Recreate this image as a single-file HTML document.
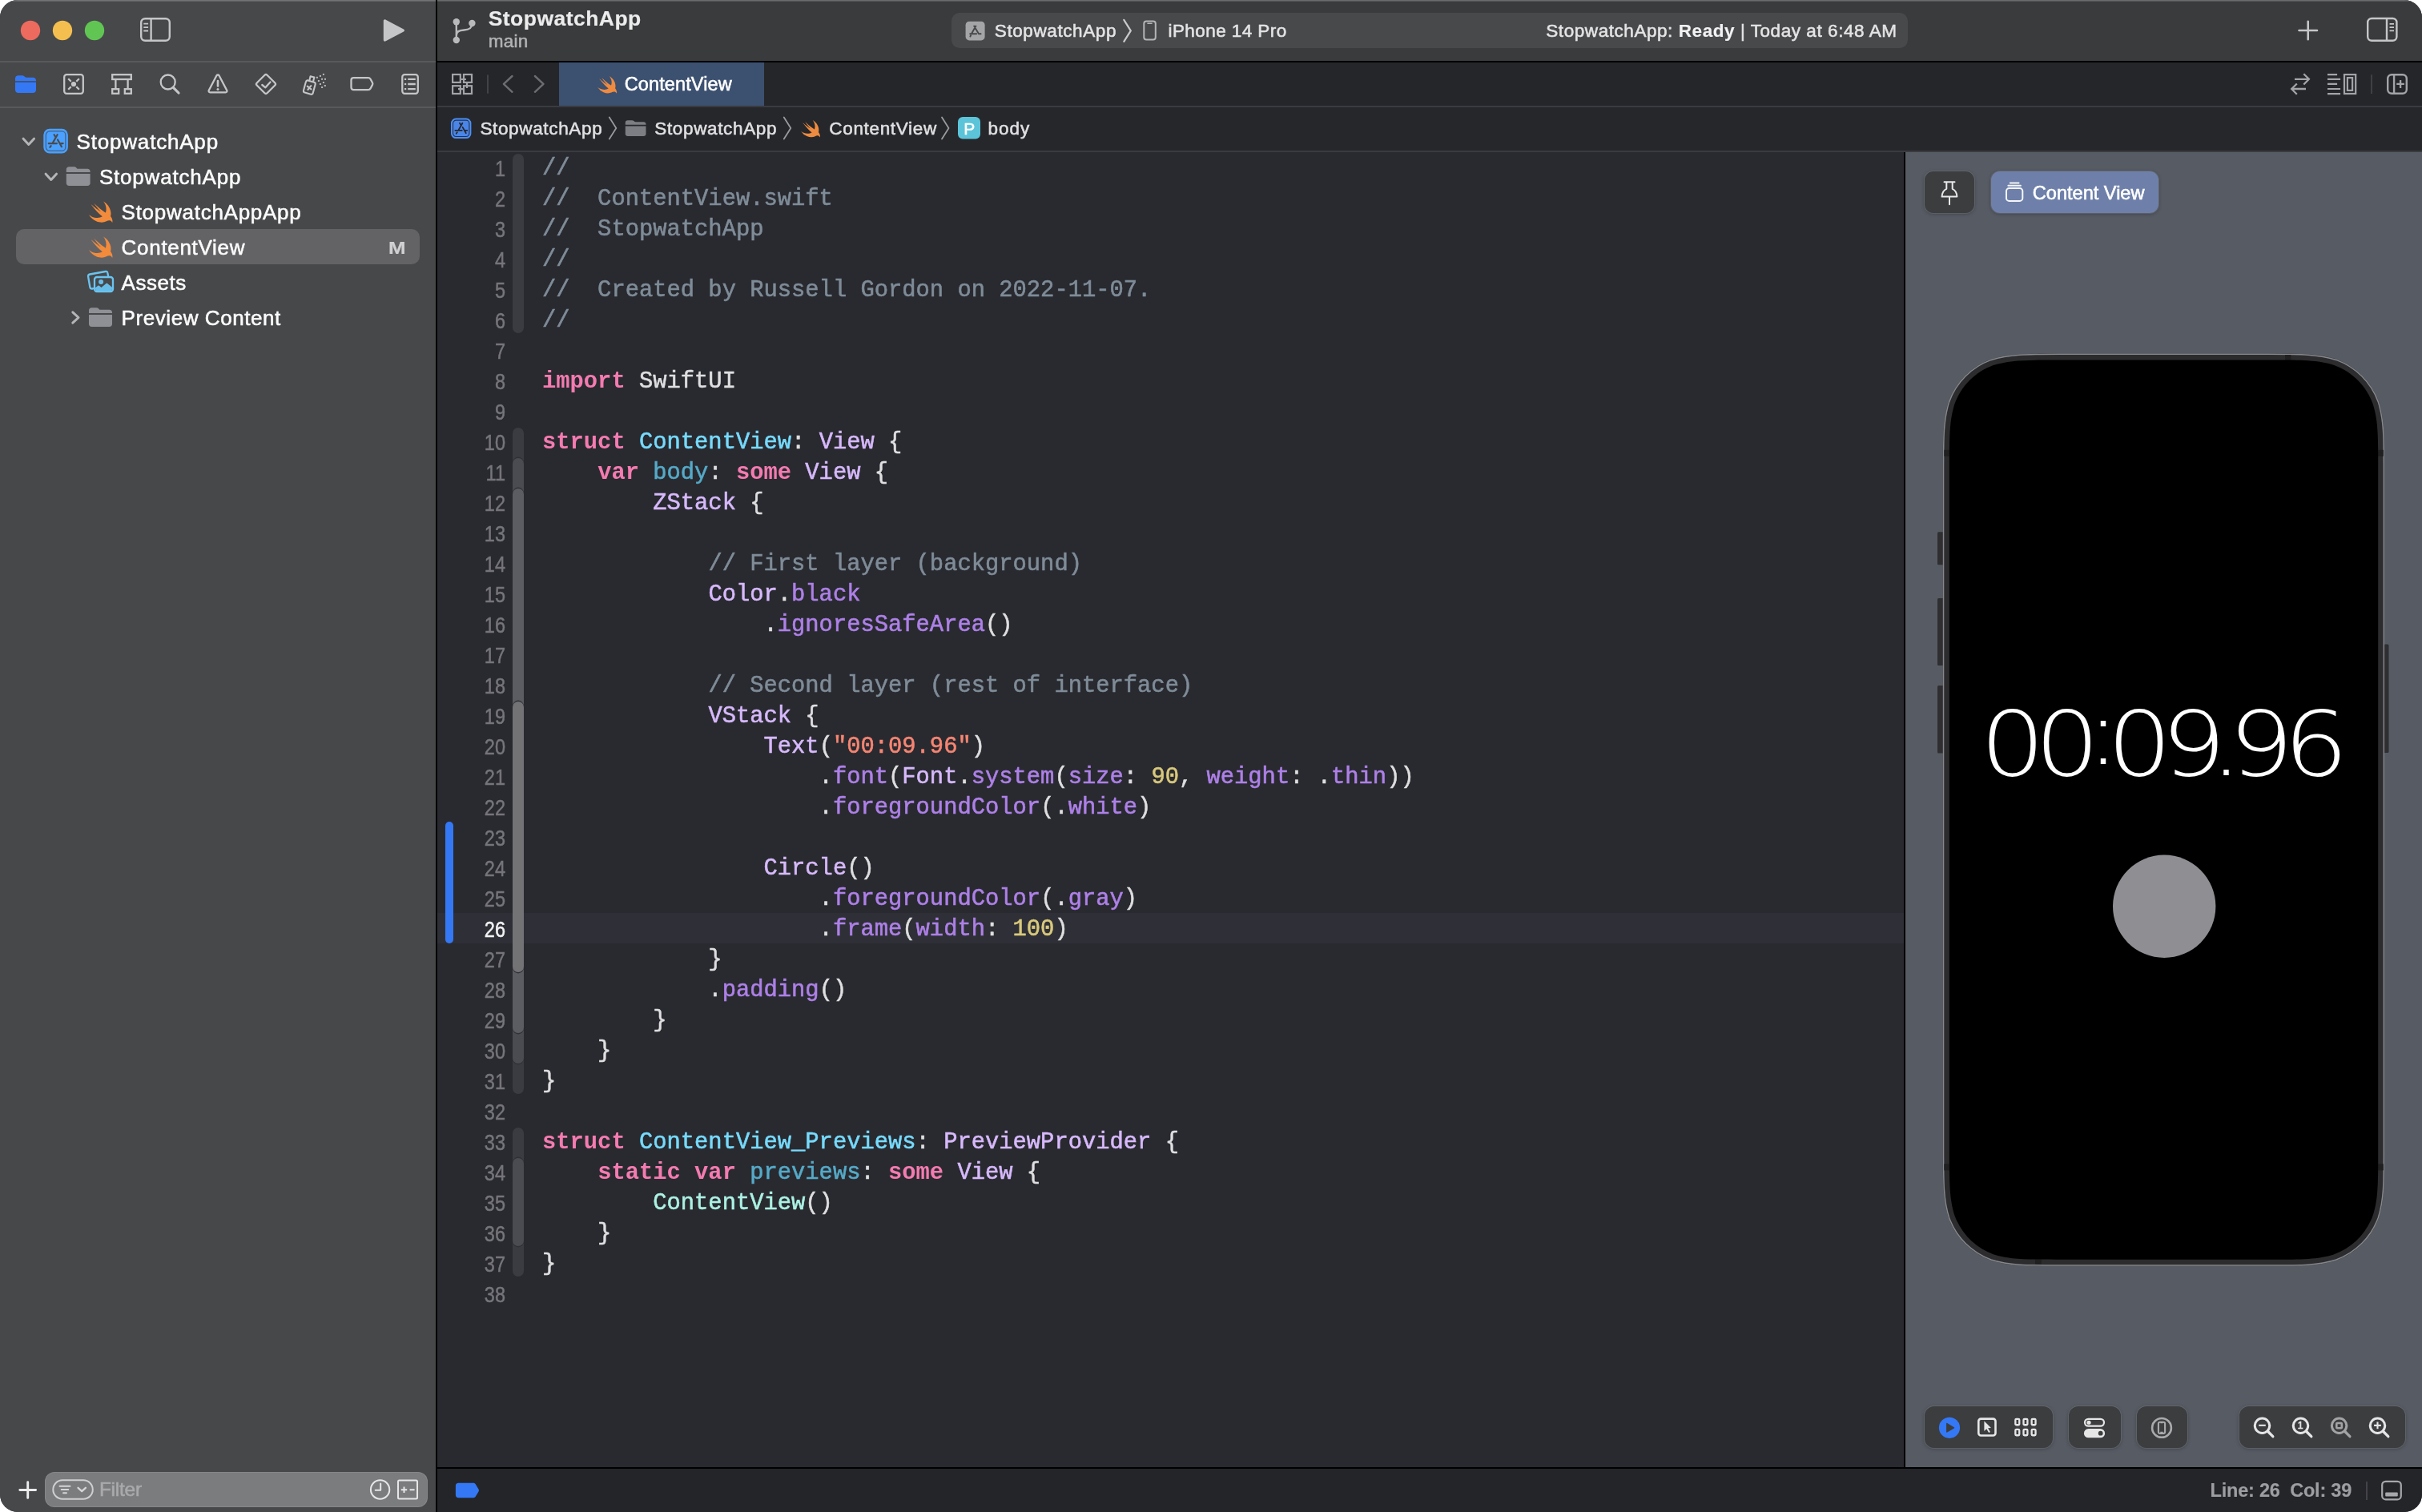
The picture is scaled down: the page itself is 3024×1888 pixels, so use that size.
<!DOCTYPE html>
<html lang="en"><head><meta charset="utf-8"><title>StopwatchApp — ContentView.swift</title>
<style>

html,body{margin:0;padding:0;background:#fff;}
body{width:3024px;height:1888px;overflow:hidden;position:relative;font-family:"Liberation Sans",sans-serif;}
#win{will-change:transform;position:absolute;left:0;top:0;width:3024px;height:1888px;border-radius:22px;overflow:hidden;background:#292a30;}
.a{position:absolute;}
.t{position:absolute;white-space:pre;line-height:1;-webkit-text-stroke:0.55px;}
svg{position:absolute;overflow:visible;}
#sidebar{left:0;top:0;width:544px;height:1888px;background:#47484a;}
#vsplit{left:544px;top:0;width:2px;height:1888px;background:#000;}
#toolbar{left:546px;top:0;width:2478px;height:76px;background:#3a3b3d;}
#tabbar{left:546px;top:78px;width:2478px;height:54px;background:#25262a;}
#crumbs{left:546px;top:134px;width:2478px;height:54px;background:#26272b;}
#editor{left:546px;top:190px;width:1831px;height:1642px;background:#292a30;overflow:hidden;}
#canvas{left:2379px;top:190px;width:645px;height:1642px;background:#575b64;overflow:hidden;}
#statusbar{left:546px;top:1834px;width:2478px;height:54px;background:#242529;}
.hl{left:0;width:3024px;height:2px;}
.code{position:absolute;left:131px;padding-top:2px;-webkit-text-stroke:0.55px;white-space:pre;font-family:"Liberation Mono",monospace;font-size:28.8px;line-height:38px;height:38px;color:#dfdfe0;}
.ln{position:absolute;left:0;padding-top:2px;-webkit-text-stroke:0.5px;width:85px;text-align:right;font-size:27px;line-height:38px;height:38px;color:#75757a;transform:scaleX(0.87);transform-origin:100% 50%;}
.c{color:#7f8c98}.k{color:#f47bb0;font-weight:bold;-webkit-text-stroke:0}.td{color:#76dbfd}.d{color:#55aac8}.s{color:#d7b9fc}.m{color:#ae80e8}.p{color:#acf2e4}.str{color:#f68572}.n{color:#d9c97c}
.btn{position:absolute;background:#3c3d3f;border-radius:12px;box-shadow:0 0 0 1px rgba(255,255,255,0.11),0 1px 5px rgba(0,0,0,0.3);}

</style></head>
<body>
<div id="win">
<div id="sidebar" class="a">
<div class="a" style="left:0;top:0;width:544px;height:2px;background:linear-gradient(#7a7b7d,#5a5b5d)"></div>
<div class="a hl" style="top:76px;width:544px;background:#58595b"></div>
<div class="a hl" style="top:133px;width:544px;background:#58595b"></div>
<div class="a" style="left:20px;top:286px;width:504px;height:44px;border-radius:10px;background:#636366"></div>
<svg width="544" height="1888" viewBox="0 0 544 1888"><circle cx="38" cy="38" r="12.200" fill="#ed6a5e"/><circle cx="78" cy="38" r="12.200" fill="#f5bf4f"/><circle cx="118" cy="38" r="12.200" fill="#61c554"/><g fill="none" stroke="#c5c6c8" stroke-width="2.400"><rect x="176.200" y="23.200" width="35.600" height="27.600" rx="5"/><path d="M188.600 23.200v27.600"/><path d="M179.300 29.700h5.800M179.300 34.100h5.800M179.300 38.500h5.800" stroke-width="1.800"/></g><path d="M478.800 26.300v23.400c0 1.700 1.500 2.400 2.900 1.600l22.300-11.900c1.400-.8 1.400-2.200 0-3l-22.300-11.700c-1.400-.8-2.900-.1-2.900 1.600z" fill="#c5c6c8"/><g fill="#3478f6"><path d="M19 98.200c0-2.500 1.500-4 4-4h4.300c1.300 0 2 .3 2.900 1.100l.9.800c.6.500 1.100.700 2 .700H41c2.500 0 4 1.500 4 4v.4H19z"/><path d="M19 102.700h26V112c0 2.500-1.500 4-4 4H23c-2.500 0-4-1.500-4-4z"/></g><g fill="none" stroke="#c5c6c8" stroke-width="2.300" ><rect x="80.200" y="93.200" width="23.600" height="23.600" rx="3"/><path d="M85.200 98.200l3.500 3.500M98.800 98.200l-3.500 3.500M85.200 111.800l3.500-3.500M98.800 111.800l-3.500-3.500"/></g><circle cx="92" cy="105" r="3.100" fill="#c5c6c8"/><g fill="none" stroke="#c5c6c8" stroke-width="2.300"><rect x="140.200" y="93.200" width="23.600" height="5.800"/><path d="M144.400 99v12M159.600 99v12"/><rect x="140.200" y="111.200" width="8" height="5.600"/><rect x="155.800" y="111.200" width="8" height="5.600"/></g><g fill="none" stroke="#c5c6c8" stroke-linecap="round"><circle cx="209.700" cy="102.500" r="9" stroke-width="2.300"/><path d="M216.400 109.300l6.600 6.700" stroke-width="3.200"/></g><path d="M270.500 94.300c.7-1.200 2.300-1.200 3 0l9.700 18.400c.7 1.300-.1 2.600-1.500 2.600h-19.400c-1.400 0-2.200-1.300-1.500-2.600z" fill="none" stroke="#c5c6c8" stroke-width="2.300" stroke-linejoin="round"/><path d="M272 101v6.500" stroke="#c5c6c8" stroke-width="2.600" stroke-linecap="round"/><circle cx="272" cy="111.400" r="1.500" fill="#c5c6c8"/><g fill="none" stroke="#c5c6c8" stroke-width="2.300" stroke-linejoin="round" stroke-linecap="round"><path d="M330.500 93.700c.9-.9 2.100-.9 3 0l9.800 9.800c.9.900.9 2.100 0 3l-9.800 9.800c-.9.900-2.100.9-3 0l-9.800-9.800c-.9-.9-.9-2.100 0-3z"/><path d="M327.300 106l4.100 3.300 6.100-6.800"/></g><g fill="none" stroke="#c5c6c8" stroke-width="2.100" stroke-linejoin="round"><path d="M383.600 100.200l8.600 2.500c1.200.4 1.800 1.400 1.500 2.600l-3 11c-.3 1.200-1.400 1.800-2.600 1.500l-7.600-2.200c-1.200-.4-1.800-1.400-1.500-2.600l2.500-9.600c.3-1.200 1-2.800 2.100-3.200z"/><path d="M386.300 100.500l1.300-5.300 4.800 1.300-1.400 5.300"/><path d="M383.700 107.600l4.800 3.800M388.300 107.100l-3.900 4.900" stroke-linecap="round"/></g><g fill="#c5c6c8" opacity=".9"><rect x="402.9" y="91.9" width="2" height="2"/><rect x="398.9" y="93.9" width="2" height="2"/><rect x="394.9" y="95.8" width="2" height="2"/><rect x="401.1" y="97.8" width="2" height="2"/><rect x="405.0" y="97.8" width="2" height="2"/><rect x="396.9" y="100.0" width="2" height="2"/><rect x="402.9" y="102.0" width="2" height="2"/><rect x="398.9" y="104.0" width="2" height="2"/><rect x="404.8" y="106.0" width="2" height="2"/><rect x="401.1" y="108.0" width="2" height="2"/></g><path d="M441.500 97.100h18.300c1.200 0 2 .4 2.600 1.400l2.600 4.800c.5.900.5 1.700 0 2.600l-2.600 4.800c-.6 1-1.400 1.400-2.600 1.400h-18.300c-1.900 0-3-1.100-3-3v-9c0-1.900 1.100-3 3-3z" fill="none" stroke="#c5c6c8" stroke-width="2.300" stroke-linejoin="round"/><g fill="none" stroke="#c5c6c8"><rect x="502.300" y="93.200" width="19.500" height="23.600" rx="3" stroke-width="2.300"/><path d="M509.200 98.900h9.600M509.200 105h9.600M509.200 111.100h9.600" stroke-width="2.300"/></g><g fill="#c5c6c8"><rect x="505" y="97.800" width="2.200" height="2.200"/><rect x="505" y="103.900" width="2.200" height="2.200"/><rect x="505" y="110" width="2.200" height="2.200"/></g><path d="M29.099999999999998 173.20000000000002L35.8 180.4L42.5 173.20000000000002" fill="none" stroke="#b4b5b7" stroke-width="3" stroke-linecap="round" stroke-linejoin="round"/><g transform="translate(54.3 160.8) scale(1.0200)"><rect x="1" y="1" width="28" height="28" rx="6.500" fill="#4aa1ff" stroke="#4aa1ff" stroke-width="2"/><rect x="3" y="3" width="24" height="24" rx="4.600" fill="none" stroke="rgba(70,82,100,.8)" stroke-width="1.300"/><g stroke="#4b4b4d" stroke-width="2.100" stroke-linecap="round" fill="none"><path d="M17 7.300 11.200 17.500M13 7.300l2.100 3.400M17.300 13.300l4.900 8.700M6.300 18h10M20 18h3.900M9.200 20.900l-1.300 1.700"/></g></g><path d="M57.099999999999994 217.20000000000002L63.8 224.4L70.5 217.20000000000002" fill="none" stroke="#b4b5b7" stroke-width="3" stroke-linecap="round" stroke-linejoin="round"/><g transform="translate(82.8 208) scale(1.146153846153846 1.0909090909090908)" fill="#8e9095"><path d="M0 3.200C0 1.400 1.200 .2 3 .2h5.200c1.100 0 1.800.300 2.500 1l.8.800c.4.400.8.500 1.400.500H23c1.800 0 3 1.200 3 3v.9H0z"/><path d="M0 8.300h26V19c0 1.800-1.200 3-3 3H3c-1.800 0-3-1.200-3-3z"/></g><path transform="translate(107.10 245.85) scale(1.6264)" fill="#f28b3c" d="M13.543 3.41c4.114 2.47 6.545 7.162 5.549 11.131-.024.093-.05.181-.076.272l.002.001c2.062 2.538 1.5 5.258 1.236 4.745-1.072-2.086-3.066-1.568-4.088-1.043a6.803 6.803 0 0 1-.281.158l-.02.012-.002.002c-2.115 1.123-4.957 1.205-7.812-.022a12.568 12.568 0 0 1-5.64-4.838c.649.48 1.35.902 2.097 1.252 3.019 1.414 6.051 1.311 8.197-.002C9.651 12.73 7.101 9.67 5.146 7.191a10.628 10.628 0 0 1-1.005-1.384c2.34 2.142 6.038 4.83 7.365 5.576C8.69 8.408 6.208 4.743 6.324 4.86c4.436 4.47 8.528 6.996 8.528 6.996.154.085.27.154.36.213.085-.215.16-.44.22-.672.71-2.6-.091-5.58-1.889-7.987z"/><path transform="translate(107.10 289.85) scale(1.6264)" fill="#f28b3c" d="M13.543 3.41c4.114 2.47 6.545 7.162 5.549 11.131-.024.093-.05.181-.076.272l.002.001c2.062 2.538 1.5 5.258 1.236 4.745-1.072-2.086-3.066-1.568-4.088-1.043a6.803 6.803 0 0 1-.281.158l-.02.012-.002.002c-2.115 1.123-4.957 1.205-7.812-.022a12.568 12.568 0 0 1-5.64-4.838c.649.48 1.35.902 2.097 1.252 3.019 1.414 6.051 1.311 8.197-.002C9.651 12.73 7.101 9.67 5.146 7.191a10.628 10.628 0 0 1-1.005-1.384c2.34 2.142 6.038 4.83 7.365 5.576C8.69 8.408 6.208 4.743 6.324 4.86c4.436 4.47 8.528 6.996 8.528 6.996.154.085.27.154.36.213.085-.215.16-.44.22-.672.71-2.6-.091-5.58-1.889-7.987z"/><g fill="none" stroke="#6ac4f0" stroke-width="2.300" stroke-linejoin="round" stroke-linecap="round"><path d="M135.100 344.600L134.400 341Q134 338.600 131.600 339L112.200 342.500Q109.700 343 110.100 345.500L112.300 358.300Q112.800 360.900 115.300 360.500L116.800 360.200"/><rect x="118" y="346" width="23" height="18.050" rx="3"/></g><circle cx="126.100" cy="352.100" r="3" fill="#68bde8"/><path d="M119 359.300L122.600 356.600Q123.200 356.200 123.800 356.700L126.500 358.900L132.500 353.900Q133.300 353.300 134.100 353.900L140 358.800V361Q140 363.200 137.800 363.200H121.200Q119 363.200 119 361Z" fill="#68bde8"/><path d="M90.80000000000001 389.8L98.0 396.5L90.80000000000001 403.2" fill="none" stroke="#b4b5b7" stroke-width="3" stroke-linecap="round" stroke-linejoin="round"/><g transform="translate(111 384) scale(1.1153846153846154 1.0909090909090908)" fill="#8e9095"><path d="M0 3.200C0 1.400 1.200 .2 3 .2h5.200c1.100 0 1.800.300 2.500 1l.8.800c.4.400.8.500 1.400.500H23c1.800 0 3 1.200 3 3v.9H0z"/><path d="M0 8.300h26V19c0 1.800-1.200 3-3 3H3c-1.800 0-3-1.200-3-3z"/></g><path d="M24.800 1860.500h19.800M34.700 1850.600v19.800" stroke="#ececed" stroke-width="2.900" stroke-linecap="round"/></svg>
<span class="t" style="left:95.6px;top:164.3px;font-size:26px;color:#fbfbfb;letter-spacing:0.803px;">StopwatchApp</span>
<span class="t" style="left:123.9px;top:208.3px;font-size:26px;color:#fbfbfb;letter-spacing:0.803px;">StopwatchApp</span>
<span class="t" style="left:151.6px;top:252.3px;font-size:26px;color:#fbfbfb;letter-spacing:0.732px;">StopwatchAppApp</span>
<span class="t" style="left:151.6px;top:296.3px;font-size:26px;color:#fbfbfb;letter-spacing:0.696px;">ContentView</span>
<span class="t" style="left:151.6px;top:340.3px;font-size:26px;color:#fbfbfb;letter-spacing:0.546px;">Assets</span>
<span class="t" style="left:151.6px;top:384.3px;font-size:26px;color:#fbfbfb;letter-spacing:0.563px;">Preview Content</span>
<span class="t" style="left:485.0px;top:298.7px;font-size:22px;color:#d0d0d2;letter-spacing:1.175px;font-weight:700;-webkit-text-stroke:0.2px;transform:scaleX(1.18);transform-origin:0 50%;">M</span>
<div class="a" style="left:56px;top:1838px;width:478px;height:44px;border-radius:12px;background:#7b7c7e;box-shadow:inset 0 0 0 1px rgba(255,255,255,0.09)"></div>
<svg width="544" height="60" viewBox="0 1830 544 60" style="left:0;top:1830px"><rect x="66.300" y="1848.300" width="49.500" height="23.400" rx="11.700" fill="none" stroke="#cfcfd1" stroke-width="2"/><path d="M74.500 1855.800h13M76.700 1860h8.600M79 1864.200h4" stroke="#d5d5d7" stroke-width="2" stroke-linecap="round"/><path d="M97.500 1857.800l4.700 4.400 4.700-4.400" fill="none" stroke="#d5d5d7" stroke-width="2.300" stroke-linecap="round" stroke-linejoin="round"/><circle cx="474.600" cy="1860" r="11.700" fill="none" stroke="#e6e6e7" stroke-width="2"/><path d="M475.200 1852.500v8.200h-6.500" fill="none" stroke="#e6e6e7" stroke-width="2" stroke-linecap="round" stroke-linejoin="round"/><rect x="497" y="1848.600" width="24" height="23" rx="1.500" fill="none" stroke="#e6e6e7" stroke-width="2"/><path d="M500.800 1860.300h7.400M504.500 1856.600v7.400M511.600 1860.300h6" stroke="#e6e6e7" stroke-width="2"/></svg>
<span class="t" style="left:123.9px;top:1847.6px;font-size:24.5px;color:#a9aaac;letter-spacing:-0.257px;">Filter</span>
</div>
<div id="vsplit" class="a"></div>
<div id="toolbar" class="a">
<div class="a" style="left:0;top:0;width:2478px;height:2px;background:linear-gradient(#737476,#4c4d4f)"></div>
<div class="a" style="left:642px;top:16px;width:1194px;height:44px;border-radius:10px;background:#48494b"></div>
<svg width="2478" height="76" viewBox="546 0 2478 76" style="left:0;top:0"><g fill="none" stroke="#b9babc" stroke-width="2.400"><path d="M569.800 30v18M569.800 44.500c0-5.500 3.500-6.500 9.500-7 7-.5 10-2.500 10-8"/></g><g fill="#b9babc"><circle cx="569.800" cy="27.200" r="4.200"/><circle cx="569.800" cy="50" r="4.200"/><circle cx="589.400" cy="29" r="4.200"/></g><rect x="1205.600" y="26.800" width="24" height="23.600" rx="4.500" fill="#a4a5a7"/><g stroke="#47484a" stroke-width="1.900" stroke-linecap="round" fill="none"><path d="M1218.400 32.500l-5.500 9.700M1216.200 32.500l5.800 9.700M1211.200 42.200h8M1222 42.200h2.600M1212.100 44.300l-.7 1.200"/></g><path d="M1403.3 24.799999999999997L1411.8 38.3L1403.3 51.8" fill="none" stroke="#c9cacc" stroke-width="2.200" stroke-linecap="round" stroke-linejoin="round"/><rect x="1428.300" y="26.600" width="14.500" height="22.800" rx="3" fill="none" stroke="#b4b5b7" stroke-width="2"/><path d="M1433 29.300h5" stroke="#b4b5b7" stroke-width="1.600" stroke-linecap="round"/><path d="M2870.500 38h22.500M2881.700 26.800v22.500" stroke="#c5c6c8" stroke-width="2.600" stroke-linecap="round"/><g fill="none" stroke="#c5c6c8" stroke-width="2.400"><rect x="2956.200" y="23" width="36.200" height="27.800" rx="5"/><path d="M2980 23v27.800"/><path d="M2983.500 29.800h5.500M2983.500 34.100h5.500M2983.500 38.400h5.500" stroke-width="1.800"/></g></svg>
<span class="t" style="left:63.7px;top:9.6px;font-size:26.5px;color:#ececed;letter-spacing:0.460px;font-weight:700;-webkit-text-stroke:0.2px;">StopwatchApp</span>
<span class="t" style="left:63.7px;top:40.8px;font-size:22.5px;color:#b1b2b4;letter-spacing:0.259px;">main</span>
<span class="t" style="left:695.8px;top:27.8px;font-size:22.5px;color:#e4e4e5;letter-spacing:0.593px;">StopwatchApp</span>
<span class="t" style="left:912.5px;top:27.8px;font-size:22.5px;color:#e4e4e5;letter-spacing:0.424px;">iPhone 14 Pro</span>
<span class="t" id="status" style="left:1384.300px;top:27.800px;font-size:22.500px;color:#e4e4e5;letter-spacing:.56px">StopwatchApp: <b style="color:#f2f2f3;-webkit-text-stroke:0.15px">Ready</b> | Today at 6:48 AM</span>
</div>
<div class="a hl" style="left:546px;top:76px;width:2478px;background:#000"></div>
<div id="tabbar" class="a">
<div class="a" style="left:152px;top:0;width:256px;height:54px;background:#3c5070"></div>
<svg width="2478" height="54" viewBox="546 78 2478 54" style="left:0;top:0"><g fill="none" stroke="#a3a4a8" stroke-width="2.200"><rect x="565.100" y="93" width="9.700" height="9.900"/><rect x="579" y="93" width="10" height="9.900"/><rect x="565.100" y="107.200" width="9.700" height="9.800"/><rect x="579" y="107.200" width="10" height="9.800"/><path d="M575.900 99H581.900M583 104V109.900M572 111.100H578"/></g><path d="M609 93.400v23.300" stroke="#424347" stroke-width="2"/><path d="M639.500 95L628.900 104.900L639.500 114.800" fill="none" stroke="#6c6d71" stroke-width="2.400" stroke-linecap="round" stroke-linejoin="round"/><path d="M667.900 95L678.500 104.900L667.900 114.800" fill="none" stroke="#6c6d71" stroke-width="2.400" stroke-linecap="round" stroke-linejoin="round"/><path transform="translate(742.81 90.47) scale(1.3297)" fill="#ee8b40" d="M13.543 3.41c4.114 2.47 6.545 7.162 5.549 11.131-.024.093-.05.181-.076.272l.002.001c2.062 2.538 1.5 5.258 1.236 4.745-1.072-2.086-3.066-1.568-4.088-1.043a6.803 6.803 0 0 1-.281.158l-.02.012-.002.002c-2.115 1.123-4.957 1.205-7.812-.022a12.568 12.568 0 0 1-5.64-4.838c.649.48 1.35.902 2.097 1.252 3.019 1.414 6.051 1.311 8.197-.002C9.651 12.73 7.101 9.67 5.146 7.191a10.628 10.628 0 0 1-1.005-1.384c2.34 2.142 6.038 4.83 7.365 5.576C8.69 8.408 6.208 4.743 6.324 4.86c4.436 4.47 8.528 6.996 8.528 6.996.154.085.27.154.36.213.085-.215.16-.44.22-.672.71-2.6-.091-5.58-1.889-7.987z"/><g fill="none" stroke="#a3a4a8" stroke-width="2.300" stroke-linejoin="miter"><path d="M2865 98.800h17M2876.300 92.300l6.600 6.500-6.600 6.700"/><path d="M2879 111h-17M2867.800 104.500l-6.600 6.500 6.600 6.700"/></g><g fill="none" stroke="#a3a4a8" stroke-width="2.200"><path d="M2906 93.100h12.100M2906 98.800h16.100M2906 104.900h12.100M2906 111h16.100M2906 117.100h16.100"/><rect x="2927" y="93.100" width="14.200" height="23.900"/><rect x="2930.900" y="97.100" width="6.200" height="15.800"/></g><path d="M2961 93.300v23.600" stroke="#47484d" stroke-width="1.600"/><g fill="none" stroke="#a3a4a8"><rect x="2981.200" y="93.200" width="23.600" height="23.600" rx="5" stroke-width="2.400"/><path d="M2989.100 93.200v23.600" stroke-width="2.400"/><path d="M2992.200 104.900h9.700M2997.100 100.100v9.800" stroke-width="2.300"/></g></svg>
<span class="t" style="left:233.8px;top:15.9px;font-size:23.5px;color:#ffffff;letter-spacing:0.099px;">ContentView</span>
</div>
<div class="a hl" style="left:546px;top:132px;width:2478px;background:#3a3b40"></div>
<div id="crumbs" class="a">
<svg width="2478" height="54" viewBox="546 134 2478 54" style="left:0;top:0"><g transform="translate(563 147.6) scale(0.8467)"><rect x="1" y="1" width="28" height="28" rx="6.500" fill="#4a86e8" stroke="#4d90f6" stroke-width="2"/><rect x="3" y="3" width="24" height="24" rx="4.600" fill="none" stroke="rgba(28,34,50,.85)" stroke-width="1.300"/><g stroke="#26262a" stroke-width="2.100" stroke-linecap="round" fill="none"><path d="M17 7.300 11.200 17.500M13 7.300l2.100 3.400M17.300 13.300l4.900 8.700M6.300 18h10M20 18h3.900M9.200 20.900l-1.300 1.700"/></g></g><path d="M760.8 146.5L769.3 160L760.8 173.5" fill="none" stroke="#9a9b9f" stroke-width="1.800" stroke-linecap="round" stroke-linejoin="round"/><g transform="translate(780.8 150) scale(0.9884615384615384 0.9090909090909091)" fill="#7d7e83"><path d="M0 3.200C0 1.400 1.200 .2 3 .2h5.200c1.100 0 1.800.300 2.500 1l.8.800c.4.400.8.500 1.400.500H23c1.800 0 3 1.200 3 3v.9H0z"/><path d="M0 8.300h26V19c0 1.800-1.200 3-3 3H3c-1.800 0-3-1.200-3-3z"/></g><path d="M978.8 146.5L987.3 160L978.8 173.5" fill="none" stroke="#9a9b9f" stroke-width="1.800" stroke-linecap="round" stroke-linejoin="round"/><path transform="translate(996.84 145.50) scale(1.3187)" fill="#ee8b40" d="M13.543 3.41c4.114 2.47 6.545 7.162 5.549 11.131-.024.093-.05.181-.076.272l.002.001c2.062 2.538 1.5 5.258 1.236 4.745-1.072-2.086-3.066-1.568-4.088-1.043a6.803 6.803 0 0 1-.281.158l-.02.012-.002.002c-2.115 1.123-4.957 1.205-7.812-.022a12.568 12.568 0 0 1-5.64-4.838c.649.48 1.35.902 2.097 1.252 3.019 1.414 6.051 1.311 8.197-.002C9.651 12.73 7.101 9.67 5.146 7.191a10.628 10.628 0 0 1-1.005-1.384c2.34 2.142 6.038 4.83 7.365 5.576C8.69 8.408 6.208 4.743 6.324 4.86c4.436 4.47 8.528 6.996 8.528 6.996.154.085.27.154.36.213.085-.215.16-.44.22-.672.71-2.6-.091-5.58-1.889-7.987z"/><path d="M1176 146.5L1184.5 160L1176 173.5" fill="none" stroke="#9a9b9f" stroke-width="1.800" stroke-linecap="round" stroke-linejoin="round"/><rect x="1196" y="146" width="28" height="27.500" rx="6" fill="#5cc4d8"/></svg>
<span class="t" style="left:53.4px;top:15.6px;font-size:22.5px;color:#e0e0e2;letter-spacing:0.651px;">StopwatchApp</span>
<span class="t" style="left:271.3px;top:15.6px;font-size:22.5px;color:#e0e0e2;letter-spacing:0.643px;">StopwatchApp</span>
<span class="t" style="left:489.3px;top:15.6px;font-size:22.5px;color:#e0e0e2;letter-spacing:0.667px;">ContentView</span>
<span class="t" style="left:657.2px;top:16.0px;font-size:21px;color:#ffffff;letter-spacing:-0.708px;">P</span>
<span class="t" style="left:687.5px;top:15.6px;font-size:22.5px;color:#e0e0e2;letter-spacing:0.978px;">body</span>
</div>
<div class="a hl" style="left:546px;top:188px;width:2478px;background:#3a3b40"></div>
<div class="a hl" style="left:546px;top:1832px;width:2478px;background:#000"></div>
<div id="statusbar" class="a">
<svg width="2478" height="54" viewBox="546 1834 2478 54" style="left:0;top:0"><path d="M572.400 1851.800h18.600c1.300 0 2.200.500 2.900 1.600l3.600 6c.6 1 .6 2 0 3l-3.600 6.200c-.7 1.100-1.600 1.600-2.900 1.600h-18.600c-2.200 0-3.500-1.300-3.500-3.500v-11.400c0-2.200 1.300-3.500 3.500-3.500z" fill="#3478f6"/><path d="M2955 1850v23" stroke="#4b4c51" stroke-width="1.600"/><rect x="2974.200" y="1849.800" width="23.600" height="22.600" rx="4.500" fill="none" stroke="#a6a7aa" stroke-width="2.200"/><rect x="2978.200" y="1863.600" width="15.600" height="5" rx="1" fill="#a6a7aa"/></svg>
<span class="t" style="left:2213.6px;top:16.1px;font-size:23.5px;color:#9d9ea1;letter-spacing:-0.223px;font-weight:700;-webkit-text-stroke:0.2px;">Line: 26  Col: 39</span>
</div>
<div id="editor" class="a">
<div class="a" style="left:0;top:950px;width:1831px;height:38px;background:#2f3037"></div>
<div class="a" style="left:10px;top:836px;width:10px;height:152px;border-radius:5px;background:#3478f6"></div>
<div class="a" style="left:94px;top:2px;width:14px;height:224px;border-radius:7px;background:#3b3c41"></div>
<div class="a" style="left:94px;top:344px;width:14px;height:832px;border-radius:7px;background:#3b3c41"></div>
<div class="a" style="left:94px;top:382px;width:14px;height:756px;border-radius:7px;background:#4b4c51;box-shadow:0 -1.4px 0 0 #303137,0 1.4px 0 0 #303137"></div>
<div class="a" style="left:94px;top:420px;width:14px;height:680px;border-radius:7px;background:#5c5d62;box-shadow:0 -1.4px 0 0 #303137,0 1.4px 0 0 #303137"></div>
<div class="a" style="left:94px;top:686px;width:14px;height:338px;border-radius:7px;background:#737376;box-shadow:0 -1.4px 0 0 #303137,0 1.4px 0 0 #303137"></div>
<div class="a" style="left:94px;top:1218px;width:14px;height:186px;border-radius:7px;background:#3b3c41"></div>
<div class="a" style="left:94px;top:1256px;width:14px;height:110px;border-radius:7px;background:#4b4c51;box-shadow:0 -1.4px 0 0 #303137,0 1.4px 0 0 #303137"></div>
<div class="ln" style="top:0px">1</div>
<div class="code" style="top:0px"><span class="c">//</span></div>
<div class="ln" style="top:38px">2</div>
<div class="code" style="top:38px"><span class="c">//  ContentView.swift</span></div>
<div class="ln" style="top:76px">3</div>
<div class="code" style="top:76px"><span class="c">//  StopwatchApp</span></div>
<div class="ln" style="top:114px">4</div>
<div class="code" style="top:114px"><span class="c">//</span></div>
<div class="ln" style="top:152px">5</div>
<div class="code" style="top:152px"><span class="c">//  Created by Russell Gordon on 2022-11-07.</span></div>
<div class="ln" style="top:190px">6</div>
<div class="code" style="top:190px"><span class="c">//</span></div>
<div class="ln" style="top:228px">7</div>
<div class="ln" style="top:266px">8</div>
<div class="code" style="top:266px"><span class="k">import</span> SwiftUI</div>
<div class="ln" style="top:304px">9</div>
<div class="ln" style="top:342px">10</div>
<div class="code" style="top:342px"><span class="k">struct</span> <span class="td">ContentView</span>: <span class="s">View</span> {</div>
<div class="ln" style="top:380px">11</div>
<div class="code" style="top:380px">    <span class="k">var</span> <span class="d">body</span>: <span class="k">some</span> <span class="s">View</span> {</div>
<div class="ln" style="top:418px">12</div>
<div class="code" style="top:418px">        <span class="s">ZStack</span> {</div>
<div class="ln" style="top:456px">13</div>
<div class="ln" style="top:494px">14</div>
<div class="code" style="top:494px">            <span class="c">// First layer (background)</span></div>
<div class="ln" style="top:532px">15</div>
<div class="code" style="top:532px">            <span class="s">Color</span>.<span class="m">black</span></div>
<div class="ln" style="top:570px">16</div>
<div class="code" style="top:570px">                .<span class="m">ignoresSafeArea</span>()</div>
<div class="ln" style="top:608px">17</div>
<div class="ln" style="top:646px">18</div>
<div class="code" style="top:646px">            <span class="c">// Second layer (rest of interface)</span></div>
<div class="ln" style="top:684px">19</div>
<div class="code" style="top:684px">            <span class="s">VStack</span> {</div>
<div class="ln" style="top:722px">20</div>
<div class="code" style="top:722px">                <span class="s">Text</span>(<span class="str">&quot;00:09.96&quot;</span>)</div>
<div class="ln" style="top:760px">21</div>
<div class="code" style="top:760px">                    .<span class="m">font</span>(<span class="s">Font</span>.<span class="m">system</span>(<span class="m">size</span>: <span class="n">90</span>, <span class="m">weight</span>: .<span class="m">thin</span>))</div>
<div class="ln" style="top:798px">22</div>
<div class="code" style="top:798px">                    .<span class="m">foregroundColor</span>(.<span class="m">white</span>)</div>
<div class="ln" style="top:836px">23</div>
<div class="ln" style="top:874px">24</div>
<div class="code" style="top:874px">                <span class="s">Circle</span>()</div>
<div class="ln" style="top:912px">25</div>
<div class="code" style="top:912px">                    .<span class="m">foregroundColor</span>(.<span class="m">gray</span>)</div>
<div class="ln" style="top:950px;color:#f2f2f3">26</div>
<div class="code" style="top:950px">                    .<span class="m">frame</span>(<span class="m">width</span>: <span class="n">100</span>)</div>
<div class="ln" style="top:988px">27</div>
<div class="code" style="top:988px">            }</div>
<div class="ln" style="top:1026px">28</div>
<div class="code" style="top:1026px">            .<span class="m">padding</span>()</div>
<div class="ln" style="top:1064px">29</div>
<div class="code" style="top:1064px">        }</div>
<div class="ln" style="top:1102px">30</div>
<div class="code" style="top:1102px">    }</div>
<div class="ln" style="top:1140px">31</div>
<div class="code" style="top:1140px">}</div>
<div class="ln" style="top:1178px">32</div>
<div class="ln" style="top:1216px">33</div>
<div class="code" style="top:1216px"><span class="k">struct</span> <span class="td">ContentView_Previews</span>: <span class="s">PreviewProvider</span> {</div>
<div class="ln" style="top:1254px">34</div>
<div class="code" style="top:1254px">    <span class="k">static</span> <span class="k">var</span> <span class="d">previews</span>: <span class="k">some</span> <span class="s">View</span> {</div>
<div class="ln" style="top:1292px">35</div>
<div class="code" style="top:1292px">        <span class="p">ContentView</span>()</div>
<div class="ln" style="top:1330px">36</div>
<div class="code" style="top:1330px">    }</div>
<div class="ln" style="top:1368px">37</div>
<div class="code" style="top:1368px">}</div>
<div class="ln" style="top:1406px">38</div>
</div>
<div class="a" style="left:2377px;top:190px;width:2px;height:1642px;background:#000"></div>
<div id="canvas" class="a">
<div class="btn" style="left:24px;top:24px;width:62px;height:52px;border-radius:11px"></div>
<div class="btn" style="left:107px;top:24px;width:208.500px;height:52px;border-radius:11px;background:#6e80aa"></div>
<span class="t" style="left:158.8px;top:39.5px;font-size:23.6px;color:#ffffff;letter-spacing:-0.019px;">Content View</span>
<svg width="645" height="1642" viewBox="2379 190 645 1642" style="left:0;top:0"><g fill="#2f2f31"><rect x="2419" y="664.300" width="8" height="41" rx="1.500"/><rect x="2419" y="747" width="8" height="84" rx="1.500"/><rect x="2419" y="856" width="8" height="84.500" rx="1.500"/><rect x="2976" y="804.400" width="6.500" height="135.700" rx="1.500"/></g><path d="M2571.02 441.60L2831.88 441.60C2873.69 441.60 2894.60 441.60 2917.11 448.72C2941.68 457.66 2961.04 477.02 2969.98 501.59C2977.10 524.10 2977.10 545.01 2977.10 586.82L2977.10 1435.58C2977.10 1477.39 2977.10 1498.30 2969.98 1520.81C2961.04 1545.38 2941.68 1564.74 2917.11 1573.68C2894.60 1580.80 2873.69 1580.80 2831.88 1580.80L2571.02 1580.80C2529.21 1580.80 2508.30 1580.80 2485.79 1573.68C2461.22 1564.74 2441.86 1545.38 2432.92 1520.81C2425.80 1498.30 2425.80 1477.39 2425.80 1435.58L2425.80 586.82C2425.80 545.01 2425.80 524.10 2432.92 501.59C2441.86 477.02 2461.22 457.66 2485.79 448.72C2508.30 441.60 2529.21 441.60 2571.02 441.60Z" fill="#2c2c2e"/><path d="M2570.63 442.35L2832.27 442.35C2873.76 442.35 2894.50 442.35 2916.83 449.41C2941.21 458.28 2960.42 477.49 2969.29 501.87C2976.35 524.20 2976.35 544.94 2976.35 586.43L2976.35 1435.97C2976.35 1477.46 2976.35 1498.20 2969.29 1520.53C2960.42 1544.91 2941.21 1564.12 2916.83 1572.99C2894.50 1580.05 2873.76 1580.05 2832.27 1580.05L2570.63 1580.05C2529.14 1580.05 2508.40 1580.05 2486.07 1572.99C2461.69 1564.12 2442.48 1544.91 2433.61 1520.53C2426.55 1498.20 2426.55 1477.46 2426.55 1435.97L2426.55 586.43C2426.55 544.94 2426.55 524.20 2433.61 501.87C2442.48 477.49 2461.69 458.28 2486.07 449.41C2508.40 442.35 2529.14 442.35 2570.63 442.35Z" fill="none" stroke="#85878b" stroke-width="1.500"/><g fill="#202021"><rect x="2427.300" y="561.800" width="7" height="7.900"/><rect x="2969" y="561.800" width="7" height="7.900"/><rect x="2427.300" y="1453.300" width="7" height="8"/><rect x="2969" y="1453.300" width="7" height="8"/><rect x="2853" y="443" width="7.300" height="7"/><rect x="2541.100" y="1572.500" width="7.700" height="6.500"/></g><path d="M2566.89 449.60L2836.21 449.60C2874.50 449.60 2893.65 449.60 2914.26 456.12C2936.76 464.31 2954.49 482.04 2962.68 504.54C2969.20 525.15 2969.20 544.30 2969.20 582.59L2969.20 1439.71C2969.20 1478.00 2969.20 1497.15 2962.68 1517.76C2954.49 1540.26 2936.76 1557.99 2914.26 1566.18C2893.65 1572.70 2874.50 1572.70 2836.21 1572.70L2566.89 1572.70C2528.60 1572.70 2509.45 1572.70 2488.84 1566.18C2466.34 1557.99 2448.61 1540.26 2440.42 1517.76C2433.90 1497.15 2433.90 1478.00 2433.90 1439.71L2433.90 582.59C2433.90 544.30 2433.90 525.15 2440.42 504.54C2448.61 482.04 2466.34 464.31 2488.84 456.12C2509.45 449.60 2528.60 449.60 2566.89 449.60Z" fill="#000"/><circle cx="2702.200" cy="1131.800" r="64.200" fill="#8e8e93"/><g fill="none" stroke="#e9e9ea" stroke-width="2" stroke-linecap="round" stroke-linejoin="round"><path d="M2427.500 227.300h13M2430.300 227.600v8.200c-3.600 1.600-5.500 5.200-5.700 9.800h18.800c-.2-4.600-2.100-8.200-5.700-9.800v-8.200M2434 245.800v9.400"/></g><g fill="none" stroke="#f4f5f8" stroke-width="2" stroke-linecap="round"><rect x="2505" y="235.100" width="20.300" height="15.800" rx="3.500"/><path d="M2507.400 231.700h15.500M2509.800 228.400h10.700"/></g></svg>
<svg id="time" width="645" height="1642" viewBox="0 0 645 1642" style="left:0;top:0"><text transform="scale(1.13 1)" x="118.58 178.94 218.58 258.67 318.58 354.42 393.01 453.54" y="778" dy="0 0 -14 14 0 0 0 0" text-anchor="middle" font-family="'DejaVu Sans Light','DejaVu Sans','Liberation Sans',sans-serif" font-weight="200" font-size="113" fill="#fff">00:09.96</text></svg>
<div class="btn" style="left:24px;top:1566px;width:160px;height:52px"></div>
<div class="btn" style="left:204px;top:1566px;width:64.5px;height:52px"></div>
<div class="btn" style="left:289px;top:1566px;width:62.5px;height:52px"></div>
<div class="btn" style="left:416.5px;top:1566px;width:207.0px;height:52px"></div>
<svg width="645" height="1642" viewBox="2379 190 645 1642" style="left:0;top:0"><circle cx="2434" cy="1782.800" r="13.100" fill="#3478f6"/><path d="M2430.800 1777.600v10.400l8.700-5.200z" fill="#3c3d3f" stroke="#3c3d3f" stroke-width="1.400" stroke-linejoin="round"/><rect x="2470.300" y="1771.600" width="21.200" height="20.900" rx="3" fill="none" stroke="#e6e6e7" stroke-width="2.600"/><path d="M2477.400 1774.600V1786.900L2480.300 1784.300L2483.100 1789.100L2484.900 1788L2482.100 1783.300L2486 1782.900Z" fill="#e6e6e7"/><g fill="none" stroke="#e6e6e7" stroke-width="2.300"><rect x="2516.35" y="1771.85" width="4.900" height="7.400" rx="1.200"/><rect x="2526.50" y="1771.85" width="4.900" height="7.400" rx="1.200"/><rect x="2536.65" y="1771.85" width="4.900" height="7.400" rx="1.200"/><rect x="2516.35" y="1784.85" width="4.900" height="7.400" rx="1.200"/><rect x="2526.50" y="1784.85" width="4.900" height="7.400" rx="1.200"/><rect x="2536.65" y="1784.85" width="4.900" height="7.400" rx="1.200"/></g><rect x="2603" y="1771.800" width="24" height="8.900" rx="4.450" fill="none" stroke="#e6e6e7" stroke-width="2.200"/><circle cx="2608" cy="1776.250" r="2.600" fill="#e6e6e7"/><rect x="2601.900" y="1784" width="26.200" height="11.300" rx="5.650" fill="#e6e6e7"/><circle cx="2622.700" cy="1789.650" r="2.900" fill="#3c3d3f"/><g fill="none" stroke="#a9aaac"><circle cx="2699" cy="1782.900" r="11.900" stroke-width="2.600"/><rect x="2694.900" y="1775.700" width="8.200" height="14.200" rx="2" stroke-width="2.100"/><path d="M2697.500 1776.700h3M2697.300 1788.300h3.400" stroke-width="1.200"/></g><g fill="none" stroke="#e6e6e7" stroke-linecap="round"><circle cx="2824.5" cy="1780.200" r="9.200" stroke-width="3"/><path d="M2831.7 1787.500l6.100 6.200" stroke-width="3.300"/></g><path d="M2820.200 1779.800h8.600" stroke="#e6e6e7" stroke-width="2.100"/><g fill="none" stroke="#e6e6e7" stroke-linecap="round"><circle cx="2872.5" cy="1780.200" r="9.200" stroke-width="3"/><path d="M2879.7 1787.500l6.100 6.200" stroke-width="3.300"/></g><g fill="none" stroke="#a3a3a5" stroke-linecap="round"><circle cx="2920.6" cy="1780.200" r="9.200" stroke-width="3"/><path d="M2927.8 1787.500l6.100 6.200" stroke-width="3.300"/></g><rect x="2917.300" y="1777" width="6.500" height="6.300" rx=".8" fill="none" stroke="#a3a3a5" stroke-width="2.600"/><g fill="none" stroke="#e6e6e7" stroke-linecap="round"><circle cx="2968.5" cy="1780.200" r="9.200" stroke-width="3"/><path d="M2975.7 1787.500l6.100 6.200" stroke-width="3.300"/></g><path d="M2964.100 1779.900h8.800M2968.500 1775.500v8.800" stroke="#e6e6e7" stroke-width="2.100"/></svg>
<span class="t" style="left:489.8px;top:1584.1px;font-size:12.4px;color:#e6e6e7;letter-spacing:-1.196px;">1</span>
</div>
</div>
</body></html>
